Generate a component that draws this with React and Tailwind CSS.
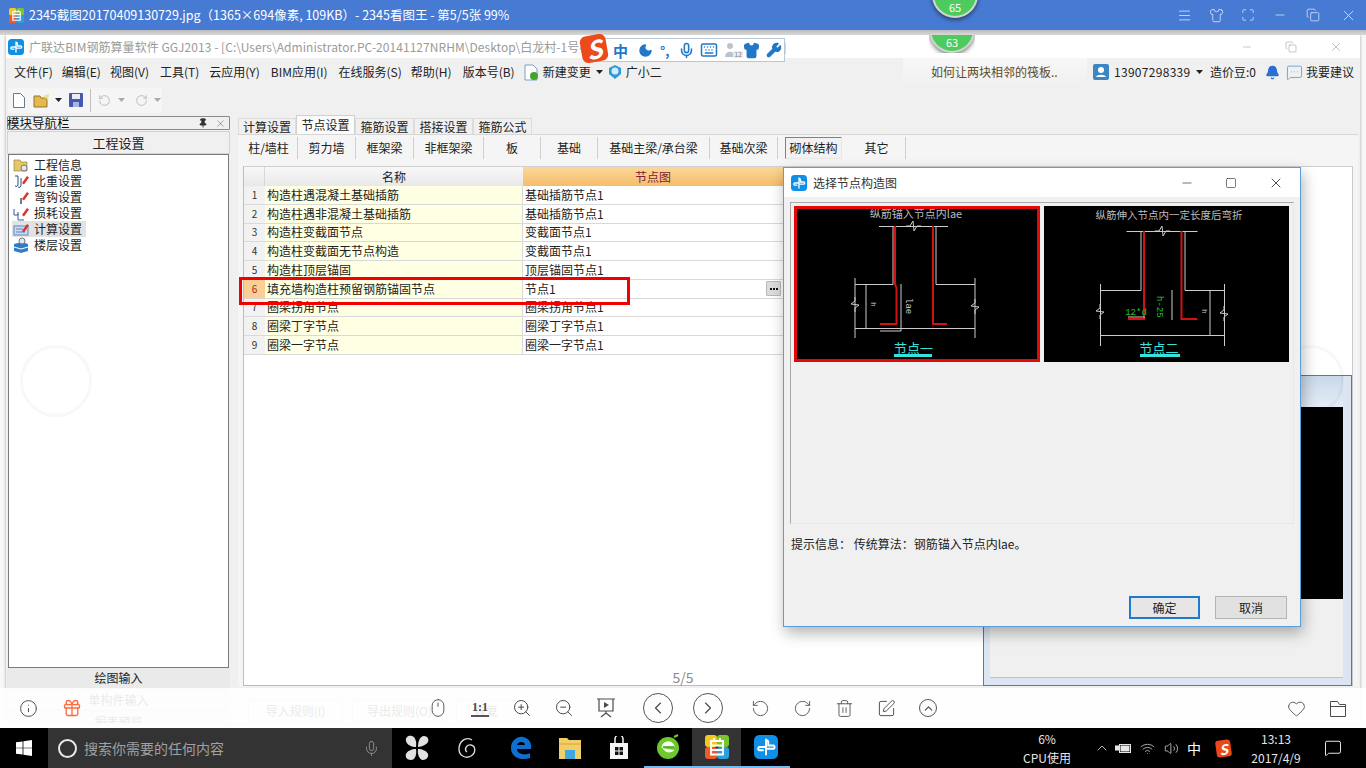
import React from "react";
import { Info, Gift, Mouse, ZoomIn, ZoomOut, ChevronLeft, ChevronRight, RotateCcw, RotateCw, Trash2, SquarePen, ChevronUp, Heart, Menu, Shirt, Maximize, Minus, Copy, X, Square, Mic, Keyboard, Wrench, Moon, Pin, MessageSquareMore, Bell, Wifi, Volume2, MessageSquare } from "lucide-react";

const Glodon = ({ s = 16 }) => (
  <svg width={s} height={s} viewBox="0 0 16 16">
    <rect width="16" height="16" rx="3.5" fill="#0f8fe6" />
    <path d="M8 3v10M8 3.5a1.5 1.5 0 0 1 1.5 1.5v2H13a1.2 1.2 0 0 1 0 2.2H9.2M8 8H3.5a1.2 1.2 0 0 0 0 2.2H6" stroke="#fff" strokeWidth="1.3" fill="none" strokeLinecap="round" />
  </svg>
);

const Caret = ({ c = "#222" }) => (
  <svg width="7" height="4" viewBox="0 0 7 4"><path d="M0 0h7L3.5 4z" fill={c} /></svg>
);

const Logo2345 = ({ s = 16 }) => (
  <svg width={s} height={s} viewBox="0 0 16 16">
    <rect width="8" height="8" rx="2" fill="#f2c91f" />
    <rect x="8" width="8" height="8" rx="2" fill="#7ac52d" />
    <rect y="8" width="8" height="8" rx="2" fill="#ee5a2f" />
    <rect x="8" y="8" width="8" height="8" rx="2" fill="#2d9fdc" />
    <path d="M4 4h8v9H4zM4 7h8M4 10h8M6 2v2M10 2v2" stroke="#fff" strokeWidth="1.2" fill="none" />
  </svg>
);

const Zig = ({ x, y, v }) =>
  v ? (
    <path d={`M${x} ${y - 7}v4l-4 3 8 1-4 3v4`} stroke="#ccc" strokeWidth="1" fill="none" />
  ) : (
    <path d={`M${x - 7} ${y}h4l3-5 1 10 3-5h4`} stroke="#ccc" strokeWidth="1" fill="none" />
  );

const CadOne = () => (
  <svg width="240" height="149" viewBox="3 3 240 149" className="block">
    <text x="122" y="12" textAnchor="middle" fontSize="11" fill="#bdbdbd" fontFamily="'Noto Sans CJK SC',sans-serif">纵筋锚入节点内lae</text>
    <g stroke="#ccc" strokeWidth="1" fill="none">
      <path d="M85 20.5h69M99 20.5v58H61M142 20.5v58h39M61 122.5h120M61 72v60M181 72v60M72 78v44M107 78v47M86 125h21" />
    </g>
    <Zig x={119} y={20} />
    <Zig x={61} y={98} v />
    <Zig x={181} y={100} v />
    <path d="M101 20v58l1.500 4v36H86M139 20v98h14" stroke="#d01212" strokeWidth="2" fill="none" />
    <text x="0" y="0" transform="translate(77,96) rotate(90)" fontSize="8" fill="#ccc" fontFamily="'Liberation Mono',monospace">h</text>
    <text x="0" y="0" transform="translate(112,92) rotate(90)" fontSize="9" fill="#ccc" fontFamily="'Liberation Mono',monospace">lae</text>
    <text x="119.500" y="147" textAnchor="middle" fontSize="13" fill="#35e3dc" fontFamily="'Noto Sans CJK SC',sans-serif">节点一</text>
    <rect x="100" y="148" width="38" height="3" fill="#35e3dc" />
  </svg>
);

const CadTwo = () => (
  <svg width="245" height="156" viewBox="0 0 245 156" className="block">
    <text x="125" y="13" textAnchor="middle" fontSize="10.500" fill="#bdbdbd" fontFamily="'Noto Sans CJK SC',sans-serif">纵筋伸入节点内一定长度后弯折</text>
    <g stroke="#ccc" strokeWidth="1" fill="none">
      <path d="M82.500 25.500h71M97 25.500v59H56.500M141 25.500v59h39.500M56.500 129.500h124M56.500 78v62M180.500 78v62M166 84v45M128 84v30" />
    </g>
    <Zig x={118} y={25} />
    <Zig x={56} y={105} v />
    <Zig x={180} y={107} v />
    <path d="M100 25v88H84M137.500 25v88h16" stroke="#d01212" strokeWidth="2" fill="none" />
    <path d="M84 111h17" stroke="#ccc" />
    <text x="92" y="109" textAnchor="middle" fontSize="9" fill="#21c62a" fontFamily="'Liberation Mono',monospace">12*d</text>
    <text x="0" y="0" transform="translate(113,90) rotate(90)" fontSize="9" fill="#21c62a" fontFamily="'Liberation Mono',monospace">h-25</text>
    <text x="0" y="0" transform="translate(158,103) rotate(90)" fontSize="8" fill="#ccc" fontFamily="'Liberation Mono',monospace">h</text>
    <text x="115" y="147" textAnchor="middle" fontSize="13" fill="#35e3dc" fontFamily="'Noto Sans CJK SC',sans-serif">节点二</text>
    <rect x="96" y="148" width="40" height="3" fill="#35e3dc" />
  </svg>
);

const MENU = [
  ["文件(F)", "mr-[9px]"], ["编辑(E)", "mr-[9px]"], ["视图(V)", "mr-[11px]"], ["工具(T)", "mr-[10px]"], ["云应用(Y)", "mr-[11px]"], ["BIM应用(I)", "mr-[11px]"], ["在线服务(S)", "mr-[9px]"], ["帮助(H)", "mr-[11px]"], ["版本号(B)", "mr-[9px]"],
];

const ROWS = [
  ["构造柱遇混凝土基础插筋", "基础插筋节点1"],
  ["构造柱遇非混凝土基础插筋", "基础插筋节点1"],
  ["构造柱变截面节点", "变截面节点1"],
  ["构造柱变截面无节点构造", "变截面节点1"],
  ["构造柱顶层锚固", "顶层锚固节点1"],
  ["填充墙构造柱预留钢筋锚固节点", "节点1"],
  ["圈梁拐角节点", "圈梁拐角节点1"],
  ["圈梁丁字节点", "圈梁丁字节点1"],
  ["圈梁一字节点", "圈梁一字节点1"],
];

const SUBTABS = [
  ["柱/墙柱", "w-[58px]"], ["剪力墙", "w-[58px]"], ["框架梁", "w-[58px]"], ["非框架梁", "w-[70px]"], ["板", "w-[57px]"], ["基础", "w-[57px]"], ["基础主梁/承台梁", "w-[112px]"], ["基础次梁", "w-[68px]"],
];

const TreeIcon = ({ i }) => {
  const pencil = <path d="M9 10l5-7 2 1.500-5 7z" fill="#d9342b" />;
  const shapes = [
    <g><path d="M1 3h6l1 2h6v9H1z" fill="#e6c66a" stroke="#8a7a3a" strokeWidth=".6" /><circle cx="11" cy="11" r="3" fill="#dfe9f2" stroke="#777" /></g>,
    <g>{pencil}<path d="M2 3h3v9a2 2 0 0 1-3 1M8 5v8a2 2 0 0 1-3 1" stroke="#28507f" fill="none" /></g>,
    <g>{pencil}<path d="M8 9v6" stroke="#222" strokeWidth="1.200" /></g>,
    <g>{pencil}<path d="M1 4v6h4V7M5 9v6h6" stroke="#3560a0" fill="none" /></g>,
    <g><rect x="1" y="5" width="14" height="9" fill="#c9dcf2" stroke="#5f86b8" /><path d="M3 8h7M3 11h9" stroke="#5f86b8" />{pencil}</g>,
    <g><path d="M1 7l8-2 6 2v7l-7 2-7-2z" fill="#2f7cc9" /><path d="M1 10l7 2 7-2" stroke="#fff" fill="none" /><circle cx="9" cy="4" r="3" fill="#dfe9f2" stroke="#777" /></g>,
  ];
  return <svg width="17" height="16" viewBox="0 0 17 16" className="shrink-0">{shapes[i]}</svg>;
};

const TREE = ["工程信息", "比重设置", "弯钩设置", "损耗设置", "计算设置", "楼层设置"];

export default function App() {
  return (
    <div className="relative w-[1366px] h-[768px] overflow-hidden flex flex-col bg-[#f8f8f8] text-[12px] text-[#222]" style={{ fontFamily: "'Noto Sans CJK SC','Noto Sans',sans-serif" }}>
      {/* viewer title */}
      <div className="h-[30px] shrink-0 bg-[#477ad3] flex items-center text-white">
        <div className="ml-[9px] mr-[5px]"><Logo2345 s={15} /></div>
        <span className="text-[12.500px] whitespace-nowrap">2345截图20170409130729.jpg（1365×694像素, 109KB）- 2345看图王 - 第5/5张 99%</span>
        <div className="ml-auto flex items-center text-[#e8effb]">
          <div className="w-[32px] flex justify-center"><Menu size={15} strokeWidth={1.200} /></div>
          <div className="w-[32px] flex justify-center"><Shirt size={15} strokeWidth={1.200} /></div>
          <div className="w-[32px] flex justify-center"><Maximize size={14} strokeWidth={1.200} /></div>
          <div className="w-[32px] flex justify-center"><Minus size={14} strokeWidth={1.200} /></div>
          <div className="w-[34px] flex justify-center"><Copy size={14} strokeWidth={1.200} /></div>
          <div className="w-[36px] flex justify-center"><X size={17} strokeWidth={1.100} /></div>
        </div>
      </div>

      {/* viewer canvas */}
      <div className="h-[5px] shrink-0 bg-gradient-to-b from-[#bdbdbd] to-[#d8d8d8]" />
      <div className="flex-1 min-h-0 pl-[6px] pr-[6px] overflow-hidden">
        {/* captured window */}
        <div className="relative h-[688px] bg-[#f0f0f0] flex flex-col overflow-hidden shadow-[0_0_3px_rgba(0,0,0,0.35)]">
          <div className="relative h-[23px] shrink-0 bg-white flex items-center text-[#9a9a9a]">
            <div className="ml-[2px] mr-[5px]"><Glodon s={16} /></div>
            <span className="whitespace-nowrap tracking-[0.05px]">广联达BIM钢筋算量软件 GGJ2013 - [C:\Users\Administrator.PC-20141127NRHM\Desktop\白龙村-1号楼钢筋算量工程文件备份模板1.GGJ12]</span>
            <div className="ml-auto flex items-center text-[#8f8f8f]">
              <div className="w-[44px] flex justify-center"><Minus size={12} strokeWidth={1} /></div>
              <div className="w-[44px] flex justify-center"><Copy size={12} strokeWidth={1} /></div>
              <div className="w-[46px] mr-[1px] flex justify-center"><X size={14} strokeWidth={1} /></div>
            </div>
          </div>

          <div className="h-[28px] shrink-0 flex items-center pl-[8px] text-[#222]">
            {MENU.map(([t, c]) => <span key={t} className={`whitespace-nowrap ${c}`}>{t}</span>)}
            <svg width="14" height="17" viewBox="0 0 14 17" className="mr-[5px]"><path d="M1 1h8l4 4v11H1z" fill="#fff" stroke="#7aa0c8" /><circle cx="10" cy="12" r="4" fill="#45a32c" /></svg>
            <span className="whitespace-nowrap mr-[5px]">新建变更</span>
            <Caret />
            <svg width="16" height="16" viewBox="0 0 16 16" className="ml-[4px] mr-[3px]"><path d="M8 1l6 3v6l-6 5-6-5V4z" fill="#2c9ad8" /><circle cx="8" cy="7" r="3.500" fill="#cdeeff" /></svg>
            <span className="whitespace-nowrap">广小二</span>
            <div className="ml-auto self-stretch w-[184px] mr-[6px] flex items-center pl-[28px] text-[#5c4a2a] bg-gradient-to-b from-[#f7f7f7] to-[#f0f0f0]">如何让两块相邻的筏板..</div>
            <svg width="16" height="16" viewBox="0 0 16 16" className="mr-[5px]"><rect width="16" height="16" rx="2" fill="#3b87c4" /><circle cx="8" cy="6" r="3" fill="#fff" /><path d="M3 13c1-3 9-3 10 0z" fill="#fff" /></svg>
            <span className="whitespace-nowrap w-[82px] tracking-[0.3px]">13907298339</span>
            <Caret />
            <span className="whitespace-nowrap ml-[7px] w-[50px]">造价豆:0</span>
            <Bell size={15} fill="#2b6fd0" stroke="#2b6fd0" className="ml-[5px] mr-[6px]" />
            <MessageSquareMore size={17} strokeWidth={1.200} className="text-[#5a9bd5] mr-[3px]" />
            <span className="whitespace-nowrap mr-[6px]">我要建议</span>
          </div>

          <div className="h-[28px] shrink-0 flex items-center">
            <div className="ml-[2px] h-[25px] w-[154px] bg-[#f5f5f5] flex items-center">
              <svg width="12" height="15" viewBox="0 0 12 15" className="ml-[5px]"><path d="M.5.500h7l4 4v10H.5z" fill="#fff" stroke="#6a7a8a" /></svg>
              <svg width="18" height="15" viewBox="0 0 18 15" className="ml-[8px]"><path d="M1 3h6l1 2h6v9H1z" fill="#e4b84c" stroke="#97752a" /><path d="M10 3l6-2-1 6z" fill="#f3dc90" /></svg>
              <div className="ml-[4px]"><Caret /></div>
              <svg width="14" height="14" viewBox="0 0 14 14" className="ml-[7px]"><rect width="14" height="14" rx="1" fill="#4557b0" /><rect x="3" y="1" width="8" height="5" fill="#e8ecf8" /><rect x="4" y="9" width="6" height="5" fill="#a9b6e4" /></svg>
              <div className="w-px h-[23px] bg-[#c0c0c0] ml-[7px]" />
              <RotateCcw size={13} className="ml-[7px] text-[#c9c9c9]" />
              <div className="ml-[7px]"><Caret c="#aaa" /></div>
              <RotateCw size={13} className="ml-[10px] text-[#c9c9c9]" />
              <div className="ml-[6px]"><Caret c="#aaa" /></div>
            </div>
          </div>

          <div className="flex-1 min-h-0 flex">
            {/* left navigation */}
            <div className="w-[223px] ml-[1px] shrink-0 flex flex-col pt-[2px]">
              <div className="h-[14px] shrink-0 border border-[#8a8a8a] rounded-[1px] bg-[#f0f0f0] flex items-center text-[12.500px] leading-none text-[#111]">
                <span className="-ml-[1px] whitespace-nowrap">模块导航栏</span>
                <Pin size={10} fill="#333" className="ml-auto mr-[7px] text-[#333]" />
                <X size={11} strokeWidth={1} className="mr-[3px] text-[#444]" />
              </div>
              <div className="h-[23px] mt-[1px] shrink-0 border border-[#d4d4d4] bg-[#f0f0f0] flex items-center justify-center text-[13px]">工程设置</div>
              <div className="h-[514px] shrink-0 ml-[1px] mr-[1px] bg-white border border-[#7a7a7a] pt-[2px] pl-[3px]">
                {TREE.map((t, i) => (
                  <div key={t} className="flex items-center h-[16px]">
                    <div className={i === 4 ? "flex items-center bg-[#e2e2e2] h-[16px] pr-[4px] pl-[1px]" : "flex items-center pl-[1px]"}>
                      <TreeIcon i={i} />
                      <span className="ml-[4px] whitespace-nowrap">{t}</span>
                    </div>
                  </div>
                ))}
              </div>
              <div className="h-[21px] shrink-0 bg-[#eaeaea] flex items-center justify-center border-b border-[#d0d0d0]">绘图输入</div>
              <div className="h-[22px] shrink-0 bg-[#eaeaea] flex items-center justify-center border-b border-[#d0d0d0]">单构件输入</div>
              <div className="h-[22px] shrink-0 bg-[#eaeaea] flex items-center justify-center">报表预览</div>
            </div>

            {/* right tabs */}
            <div className="flex-1 min-w-0 ml-[8px] flex flex-col pt-[3px] pr-[2px]">
              <div className="h-[17px] shrink-0 flex items-end leading-none">
                <div className="w-[58px] h-[16px] bg-[#f0f0f0] border border-b-0 border-[#dcdcdc] flex items-center justify-center">计算设置</div>
                <div className="w-[59px] h-[19px] bg-[#fbfbfb] border border-b-0 border-[#d0d0d0] flex items-center justify-center">节点设置</div>
                <div className="w-[59px] h-[16px] bg-[#f0f0f0] border border-b-0 border-[#dcdcdc] flex items-center justify-center">箍筋设置</div>
                <div className="w-[59px] h-[16px] bg-[#f0f0f0] border border-b-0 border-[#dcdcdc] flex items-center justify-center">搭接设置</div>
                <div className="w-[59px] h-[16px] bg-[#f0f0f0] border border-b-0 border-[#dcdcdc] flex items-center justify-center">箍筋公式</div>
              </div>
              <div className="h-[552px] shrink-0 border-t border-[#d6d6d6] bg-[#f5f5f5] pl-[5px] pr-[5px] flex flex-col">
                <div className="h-[31px] shrink-0 flex items-start pt-[2px] -ml-[3px]">
                  {SUBTABS.map(([t, w]) => (
                    <div key={t} className={`${w} h-[22px] shrink-0 flex items-center justify-center border-r border-[#cfcfcf] whitespace-nowrap`}>{t}</div>
                  ))}
                  <div className="ml-[7px] w-[57px] h-[22px] shrink-0 flex items-center justify-center border border-[#808080] border-b-[#e8e8e8] border-r-[#e8e8e8] bg-[#f2f2f2]">砌体结构</div>
                  <div className="ml-[6px] w-[58px] h-[22px] shrink-0 flex items-center justify-center border-r border-[#cfcfcf]">其它</div>
                </div>
                <div className="flex-1 min-h-0 flex bg-white border-l border-b border-[#bdbdbd] border-t-[#d0d0d0] border-t">
                  <div className="w-[739px] shrink-0">
                    <div className="flex h-[19px]">
                      <div className="w-[21px] shrink-0 bg-gradient-to-b from-[#f8f8f8] to-[#e8e8e8] border-r border-[#d8d8d8]" />
                      <div className="w-[258px] shrink-0 bg-gradient-to-b from-[#f8f8f8] to-[#e8e8e8] flex items-center justify-center leading-none">名称</div>
                      <div className="w-[260px] shrink-0 bg-gradient-to-b from-[#fbd79a] to-[#f6bd6a] flex items-center justify-center leading-none text-[#7a1f3d]">节点图</div>
                    </div>
                    {ROWS.map(([a, b], i) => (
                      <div key={a} className="flex h-[18.780px] leading-none">
                        <div className={i === 5 ? "w-[21px] shrink-0 flex items-center justify-center bg-[#f9cf94] text-[#a03020] text-[10px] border-b border-[#d9d9d9]" : "w-[21px] shrink-0 flex items-center justify-center bg-[#f2f2f2] text-[#333] text-[10px] border-b border-[#d9d9d9]"}>{i + 1}</div>
                        <div className="w-[258px] shrink-0 bg-[#ffffe3] border-b border-r border-[#d9d9d9] flex items-center pl-[2px] whitespace-nowrap">{a}</div>
                        <div className="w-[260px] shrink-0 bg-white border-b border-[#d9d9d9] flex items-center pl-[2px] whitespace-nowrap">
                          {b}
                          {i === 5 && (
                            <span className="ml-auto mr-[2px] w-[15px] h-[15px] bg-[#dcdcdc] border border-[#b8b8b8] rounded-[1px] flex items-center justify-center gap-[1px]">
                              <span className="w-[2px] h-[2px] bg-[#111]" />
                              <span className="w-[2px] h-[2px] bg-[#111]" />
                              <span className="w-[2px] h-[2px] bg-[#111]" />
                            </span>
                          )}
                        </div>
                      </div>
                    ))}
                  </div>
                  {/* preview frame */}
                  <div className="flex-1 min-w-0 pt-[208px] border-r border-[#c8c8c8]">
                    <div className="h-[311px] border border-[#6e7480] bg-[#dbe6f2] flex flex-col pl-[6px] pr-[8px] pb-[7px]">
                      <div className="h-[31px] shrink-0 bg-gradient-to-b from-[#c8d8ea] to-[#e4edf6]" />
                      <div className="h-[192px] shrink-0 bg-black" />
                      <div className="flex-1 bg-[#f0f0f0] border-b border-[#b8c4d2]" />
                    </div>
                  </div>
                </div>
              </div>
              <div className="flex mt-[14px] ml-[10px] gap-[9px]">
                <div className="w-[95px] h-[22px] border border-[#cfcfcf] bg-[#f2f2f2] flex items-center justify-center">导入规则(I)</div>
                <div className="w-[95px] h-[22px] border border-[#cfcfcf] bg-[#f2f2f2] flex items-center justify-center">导出规则(O)</div>
                <div className="w-[60px] h-[22px] border border-[#cfcfcf] bg-[#f2f2f2] flex items-center justify-center">恢复</div>
              </div>
            </div>
          </div>
        </div>
      </div>

      {/* taskbar */}
      <div className="h-[40px] shrink-0 bg-black flex items-stretch text-[#e6e6e6]">
        <div className="w-[48px] shrink-0 flex items-center justify-center">
          <svg width="16" height="16" viewBox="0 0 16 16" fill="#fff"><path d="M0 2.300l6.600-.9v6.300H0zM7.400 1.300L16 0v7.700H7.400zM0 8.300h6.600v6.300L0 13.700zM7.400 8.300H16V16l-8.600-1.300z" /></svg>
        </div>
        <div className="w-[344px] shrink-0 bg-[#333333] flex items-center text-[#a0a0a0] text-[14px]">
          <span className="ml-[10px] w-[19px] h-[19px] rounded-full border-[2.500px] border-[#e8e8e8] shrink-0" />
          <span className="ml-[7px] whitespace-nowrap">搜索你需要的任何内容</span>
          <Mic size={17} strokeWidth={1.200} className="ml-auto mr-[12px] text-[#9a9a9a]" />
        </div>
        <div className="w-[50px] flex items-center justify-center">
          <svg width="24" height="26" viewBox="0 0 24 26" fill="#e2e2e2"><path d="M11 12C7 12 2 10 1 6s3-6 6-5 5 5 4 11zM13 12c0-6 2-11 6-11s5 4 4 6-6 5-10 5zM11 14c1 6-1 11-5 11s-6-3-5-6 6-5 10-5zM13 14c4 0 9 2 10 5s-2 6-5 6-6-5-5-11z" /></svg>
        </div>
        <div className="w-[50px] flex items-center justify-center">
          <svg width="20" height="24" viewBox="0 0 20 24" fill="none" stroke="#d8d8d8" strokeWidth="1.400"><path d="M15 4C8 0 2 6 2 13s7 10 12 7 5-10 0-11-7 5-4 7" /></svg>
        </div>
        <div className="w-[54px] flex items-center justify-center pl-[4px]">
          <svg width="22" height="24" viewBox="0 0 22 24"><path d="M21 13H7c0 5 8 7 13 4v5c-8 3-19 0-19-10C1 4 8 0 13 1c6 1 9 6 8 12zM7 9h8c0-4-7-4-8 0z" fill="#0d6fd1" /></svg>
        </div>
        <div className="w-[48px] flex items-center justify-center">
          <svg width="22" height="22" viewBox="0 0 22 22"><path d="M0 1h8l2 2h12v19H0z" fill="#f0cf6b" /><rect y="6" width="22" height="2" fill="#e6b94a" /><rect x="6" y="13" width="10" height="9" fill="#3fa8e0" /></svg>
        </div>
        <div className="w-[50px] flex items-center justify-center">
          <svg width="20" height="24" viewBox="0 0 20 24"><path d="M1 7h18v16H1z" fill="#f5f5f5" /><path d="M6 7V3a4 4 0 0 1 8 0v4" stroke="#f5f5f5" fill="none" strokeWidth="1.500" /><path d="M6 11h3.500v3.500H6zM10.500 11H14v3.500h-3.500zM6 15.500h3.500V19H6zM10.500 15.500H14V19h-3.500z" fill="#111" /></svg>
        </div>
        <div className="w-[48px] relative flex items-center justify-center border-b-[2px] border-[#76b9ed]">
          <svg width="24" height="26" viewBox="0 0 24 26"><circle cx="12" cy="14" r="11" fill="#6cc82e" /><path d="M6 14c0-8 12-8 12-1H7c1 6 8 6 11 3" fill="#f2faea" stroke="#f2faea" /><path d="M7 13h11" stroke="#3f9a1e" strokeWidth="1.500" /><path d="M18 3l4-2" stroke="#6cc82e" strokeWidth="2" /></svg>
        </div>
        <div className="w-[49px] flex items-center justify-center bg-[#333333] border-b-[2px] border-[#76b9ed]"><Logo2345 s={24} /></div>
        <div className="w-[49px] flex items-center justify-center border-b-[2px] border-[#76b9ed]"><Glodon s={24} /></div>
        <div className="ml-[227px] w-[60px] flex flex-col items-center justify-center leading-[19px] text-[12px]">
          <span>6%</span>
          <span>CPU使用</span>
        </div>
        <div className="w-[33px] flex items-center justify-end"><ChevronUp size={16} strokeWidth={1.200} /></div>
        <div className="w-[24px] ml-[1px] flex items-center justify-center">
          <svg width="16" height="12" viewBox="0 0 16 12" fill="none" stroke="#e6e6e6"><rect x="4.500" y="2.500" width="11" height="8" /><rect x="6" y="4" width="8" height="5" fill="#e6e6e6" /><path d="M0 4h4v4H0z" fill="#e6e6e6" /></svg>
        </div>
        <div className="w-[25px] flex items-center justify-center"><Wifi size={15} strokeWidth={1.300} className="text-[#c8c8c8]" /></div>
        <div className="w-[22px] flex items-center justify-center"><Volume2 size={15} strokeWidth={1.200} /></div>
        <div className="w-[24px] flex items-center justify-center text-[14px] text-white">中</div>
        <div className="w-[34px] flex items-center justify-center">
          <span className="w-[15px] h-[17px] rounded-[3px] bg-[#e8481a] text-white font-bold italic text-[14px] leading-none flex items-center justify-center -rotate-[8deg]">S</span>
        </div>
        <div className="w-[72px] flex flex-col items-center justify-center leading-[19px] text-[12px]">
          <span>13:13</span>
          <span>2017/4/9</span>
        </div>
        <div className="w-[42px] flex items-center justify-center"><MessageSquare size={18} strokeWidth={1.200} className="text-white" /></div>
      </div>

      {/* notification badges, clipped behind the captured window */}
      <div className="absolute left-[929px] top-[35px] w-[46px] h-[18px] overflow-hidden">
        <div className="absolute left-0 bottom-0 w-[46px] h-[48px] rounded-full bg-[#4ecb5e] border-[2px] border-[#cfd6cf] shadow-[0_2px_4px_rgba(0,0,0,0.5)] flex items-end justify-center pb-[3px] text-white text-[11px] leading-none">63</div>
      </div>
      <div className="absolute left-[932px] top-[-30px] w-[46px] h-[48px] rounded-full bg-[#4ecb5e] border-[2px] border-[#cfd6cf] shadow-[0_2px_4px_rgba(0,0,0,0.5)] flex items-end justify-center pb-[3px] text-white text-[11px] leading-none">65</div>

      {/* input-method bar */}
      <div className="absolute left-[585px] top-[38px] w-[200px] h-[24px] bg-white border border-[#b9c6d8] flex items-center text-[#1f78c8]">
        <span className="ml-[27px] text-[15px] font-bold leading-none">中</span>
        <Moon size={15} fill="#1f78c8" className="ml-[10px]" />
        <span className="ml-[7px] w-[18px] text-[13px] font-bold leading-none whitespace-nowrap">°,</span>
        <Mic size={17} strokeWidth={2.200} />
        <Keyboard size={18} strokeWidth={2} className="ml-[5px]" />
        <span className="ml-[6px] relative w-[16px] h-[16px] flex items-end">
          <svg width="16" height="16" viewBox="0 0 16 16" fill="#b9c4cf"><circle cx="6" cy="4" r="3" /><path d="M1 15c0-7 10-7 10 0z" /></svg>
          <span className="absolute right-[-3px] bottom-0 text-[7px] leading-none text-[#7a8794] bg-[#e8edf2] px-[1px]">12</span>
        </span>
        <Shirt size={17} fill="#1f78c8" className="ml-[3px]" />
        <Wrench size={16} fill="#1f78c8" className="ml-[6px]" />
      </div>
      <span className="absolute left-[581px] top-[35px] w-[26px] h-[27px] rounded-[6px] bg-[#ec4a1a] text-white font-bold italic text-[25px] leading-none flex items-center justify-center -rotate-[10deg]">S</span>

      {/* highlight */}
      <div className="absolute left-[239px] top-[277px] w-[391px] h-[28px] border-[3px] border-[#f00000] pointer-events-none" />

      {/* faint viewer buttons */}
      <div className="absolute left-[20px] top-[345px] w-[72px] h-[72px] rounded-full border-[3px] border-[#f8f8f8] pointer-events-none" />
      <div className="absolute left-[1276px] top-[345px] w-[68px] h-[70px] rounded-full border-[3px] border-[#00000008] pointer-events-none" />

      {/* dialog */}
      <div className="absolute left-[783px] top-[167px] w-[518px] h-[460px] bg-[#f0f0f0] border border-[#5d9bdc] shadow-[2px_6px_14px_rgba(0,0,0,0.3)] flex flex-col">
        <div className="h-[29px] shrink-0 bg-white flex items-center">
          <div className="ml-[7px] mr-[6px]"><Glodon s={16} /></div>
          <span className="text-[#333]">选择节点构造图</span>
          <div className="ml-auto flex items-center text-[#222]">
            <div className="w-[44px] flex justify-center"><Minus size={14} strokeWidth={1.100} /></div>
            <div className="w-[44px] flex justify-center"><Square size={12} strokeWidth={1.200} /></div>
            <div className="w-[46px] mr-[1px] flex justify-center"><X size={16} strokeWidth={1.200} /></div>
          </div>
        </div>
        <div className="h-[322px] shrink-0 mx-[6px] mt-[5px] border-l border-t border-[#a8a8a8] border-r-[#e8e8e8] border-b-[#e8e8e8] border-r border-b pl-[3px] pt-[3px] flex items-start gap-[4px]">
          <div className="w-[246px] h-[156px] bg-black border-[3px] border-[#e00a0a] shrink-0"><CadOne /></div>
          <div className="w-[245px] h-[156px] bg-black shrink-0"><CadTwo /></div>
        </div>
        <div className="mx-[7px] mt-[14px] leading-none whitespace-nowrap h-[16px]">提示信息： 传统算法：钢筋锚入节点内lae。</div>
        <div className="mt-auto flex justify-end gap-[15px] pr-[13px] pb-[7px]">
          <div className="w-[71px] h-[23px] bg-[#e6e6e6] border-[2px] border-[#1f7ad0] flex items-center justify-center">确定</div>
          <div className="w-[72px] h-[23px] bg-[#e1e1e1] border border-[#b4b4b4] flex items-center justify-center">取消</div>
        </div>
      </div>

      {/* 5/5 */}
      <div className="absolute left-[668px] top-[668px] w-[30px] text-center text-[14px] leading-[18px] text-[#8a8a8a]">5/5</div>

      {/* viewer toolbar */}
      <div className="absolute left-0 right-0 top-[688px] h-[40px] bg-white/90 flex items-center text-[#4a4a4a]">
        <div className="w-[56px] flex justify-center"><Info size={19} strokeWidth={1.200} /></div>
        <div className="w-[32px] flex justify-center"><Gift size={20} strokeWidth={1.600} className="text-[#ff6b3d]" /></div>
        <div className="ml-[329px] w-[42px] flex justify-center"><Mouse size={20} strokeWidth={1.100} /></div>
        <div className="w-[42px] flex justify-center"><span className="text-[12px] font-bold border-b-[2px] border-[#555] leading-[15px] px-[1px]" style={{ fontFamily: "'Liberation Serif',serif" }}>1:1</span></div>
        <div className="w-[42px] flex justify-center"><ZoomIn size={20} strokeWidth={1.200} /></div>
        <div className="w-[42px] flex justify-center"><ZoomOut size={20} strokeWidth={1.200} /></div>
        <div className="w-[42px] flex justify-center">
          <svg width="18" height="20" viewBox="0 0 18 20" fill="none" stroke="#4a4a4a" strokeWidth="1.200"><path d="M0 1h18M2 1v12h14V1M9 13v2M4 19l5-4 5 4" /><path d="M7 4l5 3-5 3z" fill="#4a4a4a" stroke="none" /></svg>
        </div>
        <div className="ml-[16px] w-[30px] h-[30px] rounded-full border border-[#555] flex items-center justify-center"><ChevronLeft size={20} strokeWidth={1.400} /></div>
        <div className="ml-[20px] w-[30px] h-[30px] rounded-full border border-[#555] flex items-center justify-center"><ChevronRight size={20} strokeWidth={1.400} /></div>
        <div className="ml-[16px] w-[42px] flex justify-center"><RotateCcw size={19} strokeWidth={1.100} /></div>
        <div className="w-[42px] flex justify-center"><RotateCw size={19} strokeWidth={1.100} /></div>
        <div className="w-[42px] flex justify-center"><Trash2 size={19} strokeWidth={1.100} /></div>
        <div className="w-[42px] flex justify-center"><SquarePen size={19} strokeWidth={1.200} /></div>
        <div className="w-[42px] flex justify-center"><span className="w-[18px] h-[18px] rounded-full border border-[#555] flex items-center justify-center"><ChevronUp size={13} strokeWidth={2} /></span></div>
        <div className="ml-[326px] w-[42px] flex justify-center"><Heart size={19} strokeWidth={1.100} /></div>
        <div className="w-[42px] flex justify-center">
          <svg width="16" height="17" viewBox="0 0 16 17" fill="none" stroke="#4a4a4a"><path d="M.5 1.500h7l2 3h6v12H.5zM.5 6.500h15" /></svg>
        </div>
      </div>
    </div>
  );
}
